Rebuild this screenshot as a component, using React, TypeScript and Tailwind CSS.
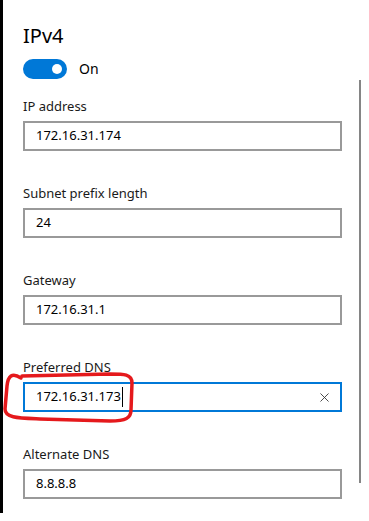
import { X } from "lucide-react";

const fields = [
  { label: "IP address", value: "172.16.31.174" },
  { label: "Subnet prefix length", value: "24" },
  { label: "Gateway", value: "172.16.31.1" },
  { label: "Preferred DNS", value: "172.16.31.173", focused: true },
  { label: "Alternate DNS", value: "8.8.8.8" },
];

function Field({ label, value, focused }: { label: string; value: string; focused?: boolean }) {
  return (
    <div className="flex flex-col">
      <div className="h-[20px] text-[13px] leading-[20px] text-[#1a1a1a]">{label}</div>
      <div
        className={`mt-[5px] h-[30px] w-[319px] border-2 flex items-center pl-[11px] pr-[6px] text-[13px] text-black ${
          focused ? "border-[#0078d7]" : "border-[#999999]"
        }`}
      >
        <span>{value}</span>
        {focused && <span className="ml-px h-[20px] w-px bg-black" />}
        {focused && (
          <span className="ml-auto flex items-center justify-center w-[20px] text-[#333]">
            <X size={15} strokeWidth={1.4} />
          </span>
        )}
      </div>
    </div>
  );
}

export default function App() {
  return (
    <div
      className="relative flex w-[369px] h-[521px] bg-white overflow-hidden"
      style={{ fontFamily: '"Segoe UI", "Noto Sans", "Open Sans", sans-serif' }}
    >
      {/* window edge on the left */}
      <div className="w-[3px] h-[513px] bg-black shrink-0" />

      <div className="flex flex-col pl-[20px] pt-[22px]">
        <div className="text-[20px] leading-[28px] text-black">IPv4</div>
        <div className="mt-[8px] flex items-center gap-[12px]">
          <div className="w-[44px] h-[20px] rounded-full bg-[#0078d7] flex items-center justify-end pr-[5px]">
            <div className="w-[10px] h-[10px] rounded-full bg-white" />
          </div>
          <span className="text-[14px] text-black">On</span>
        </div>
        <div className="mt-[17px] flex flex-col gap-[32px]">
          {fields.map((f) => (
            <Field key={f.label} {...f} />
          ))}
        </div>
      </div>

      {/* scrollbar */}
      <div className="ml-[17px] mt-[80px] w-[2px] h-[403px] bg-[#858585] shrink-0" />

      {/* red annotation around preferred DNS */}
      <svg className="absolute left-0 top-0 pointer-events-none" width="369" height="521">
        <path
          d="M 21 378 C 12 372, 8 376, 7 386 L 5 409 C 5 418, 18 418, 40 419 L 110 421 C 126 421, 131 418, 131 410 L 132 383 C 132 374, 124 374, 110 374 L 22 376"
          fill="none"
          stroke="#e5191c"
          strokeWidth="3.5"
          strokeLinecap="round"
          strokeLinejoin="round"
        />
      </svg>
    </div>
  );
}
